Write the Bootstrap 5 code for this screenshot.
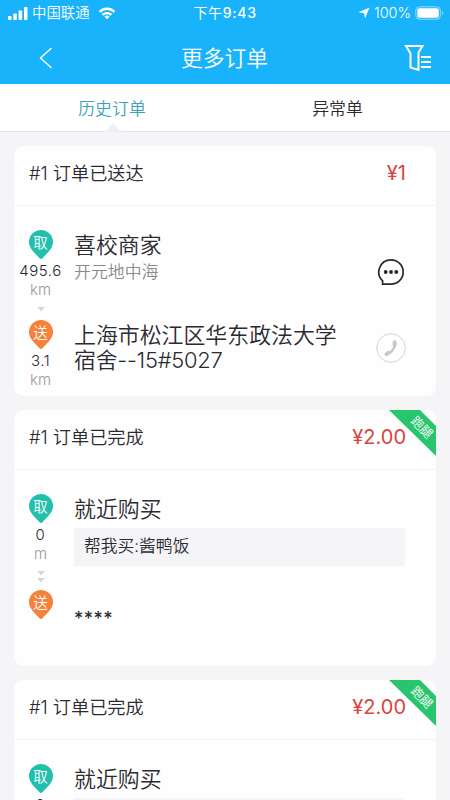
<!DOCTYPE html>
<html lang="zh-CN">
<head>
<meta charset="utf-8">
<meta name="viewport" content="width=device-width, initial-scale=1">
<title>更多订单</title>
<link href="https://cdn.jsdelivr.net/npm/bootstrap@5.3.0/dist/css/bootstrap.min.css" rel="stylesheet">
<style>
body{font-family:Inter,"Noto Sans CJK SC",sans-serif;font-weight:350;color:#2b2a30;background:#f5f4f7;height:800px;overflow:hidden;line-height:1}
svg{display:block;flex:none}
.topbar{background:#19b3fb;height:84px;color:#fff}
.status{height:25px;padding:1px 6px 0 8px;font-size:14.4px}
.status>div{flex:1 1 0}
.status .clock{font-weight:400;letter-spacing:.7px;font-size:14px;margin-right:2px}
.status .clock b{font-weight:500}
.title-row{height:66px;padding:0 18px 0 39px}
.title-row h1{font-size:21.8px;font-weight:350;margin:0 8px 0 0}
.tabs{height:48px;background:#fff;border-bottom:1px solid #e4e3e7;font-size:16.9px}
.tabs a{color:inherit;text-decoration:none;padding-top:3px}
.tabs .current{color:#3fa0bb;padding-right:1px}
.notch{left:50%;bottom:-1px;transform:translateX(-50%)}
.orders{padding-top:14px}
.order{margin:0 14px 14px;border-radius:9px;background:#fefefe;overflow:hidden}
.order-head{height:60px;padding:0 30px 5px 15px;border-bottom:1px solid #f2f1f4;font-size:18.2px}
.price{color:#d9443f;font-size:20px;font-weight:400}
.stop{padding-right:30px}
.rail{width:53px;flex:none;font-size:15px;font-weight:350;text-align:center}
.pin{width:24px;height:29px;margin:0 auto}
.pin span{left:0;right:0;top:5px;color:#fff;font-size:14.5px;line-height:16px}
.num{height:19px;line-height:19px;margin-top:2px;letter-spacing:.5px}
.unit{color:#99989d;height:19px;line-height:19px}
.name{font-size:21.9px;line-height:25px}
.stars{font-size:18px;letter-spacing:.4px;font-weight:450}
.house{letter-spacing:-.25px}
.sub{font-size:16.9px;color:#8d8b91;line-height:20px;margin-top:4px}
.info{padding:3px 0 0 7px}
.note{background:#f5f4f7;height:38px;width:331px;padding-left:10px;margin-top:6px;font-size:16.8px;line-height:37px}
.ribbon{right:0;top:0;width:47px;height:46px}
.ribbon b{left:20px;top:11px;width:26px;font-size:12.5px;line-height:14px;font-weight:350;color:#fff;transform:rotate(45deg)}
.first-body{height:190px;padding-top:24px}
.first-body .stop:first-child{height:90px}
.action{margin-right:1px}
.chat{margin-top:28px}
.call{margin-top:13px;margin-right:0}
.buy-body{height:196px;padding-top:24px}
.buy-body .stop:first-child{height:96px}
</style>
<script src="https://cdn.jsdelivr.net/npm/bootstrap@5.3.0/dist/js/bootstrap.bundle.min.js"></script>
</head>
<body>
<svg width="0" height="0" class="position-absolute">
  <defs>
    <path id="pin-shape" d="M12 0a12 12 0 0 1 12 12c0 7-7 12-10.5 16.200q-1.500 1.600-3 0C7 24 0 19 0 12A12 12 0 0 1 12 0z"/>
    <path id="ribbon-shape" d="M0 0H31L47 16V46z"/>
  </defs>
</svg>
<header class="topbar">
  <div class="status d-flex align-items-center">
    <div class="d-flex align-items-center">
      <svg width="20" height="13" fill="#fff"><rect y="9" width="3.500" height="4" rx=".8"/><rect x="5.300" y="6.500" width="3.500" height="6.500" rx=".8"/><rect x="10.600" y="3.500" width="3.500" height="9.500" rx=".8"/><rect x="16" width="3.500" height="13" rx=".8"/></svg>
      <span class="ms-1 text-nowrap">中国联通</span>
      <svg class="ms-2" width="18" height="13" viewBox="0 0 20 14" fill="none" stroke="#fff" stroke-width="2.600"><path d="M1.800 5.200a11.500 11.500 0 0 1 16.400 0M5 8.600a7 7 0 0 1 10 0"/><path d="M10 13.500 7.200 10.600a4 4 0 0 1 5.600 0z" fill="#fff" stroke="none"/></svg>
    </div>
    <span class="clock">下午<b>9:43</b></span>
    <div class="d-flex align-items-center justify-content-end">
      <svg width="12" height="12" fill="#fff"><path d="M11.500.5 7 11.500 6 6.200.5 5.300z"/></svg>
      <span class="mx-1">100%</span>
      <svg width="29" height="14" fill="none"><rect x=".8" y=".8" width="24.500" height="12.400" rx="3.500" stroke="#8fdcff"/><rect x="2.300" y="2.300" width="21.500" height="9.400" rx="2" fill="#fff"/><path d="M27 5q1.500 2 0 4" stroke="#8fdcff"/></svg>
    </div>
  </div>
  <div class="title-row d-flex align-items-center justify-content-between">
    <svg width="14" height="24" fill="none" stroke="#fff" stroke-width="1.400"><path d="M12.500 2 1.500 12l11 10"/></svg>
    <h1>更多订单</h1>
    <svg width="28" height="28" fill="none" stroke="#fff" stroke-width="2"><path d="M2 2h16.500L14.500 8.500V26L6.500 23.500V9.500z"/><path d="M17 13h10M17 18h10M17 23h10"/></svg>
  </div>
</header>
<nav class="tabs d-flex">
  <a href="#" class="current position-relative w-50 d-flex align-items-center justify-content-center">历史订单
    <svg class="notch position-absolute" width="16" height="9"><path d="M0 9 8 0l8 9z" fill="#f0eff3"/></svg>
  </a>
  <a href="#" class="w-50 d-flex align-items-center justify-content-center">异常单</a>
</nav>
<main class="orders">
  <section class="order">
    <div class="order-head d-flex align-items-center justify-content-between"><span>#1 订单已送达</span><span class="price">¥1</span></div>
    <div class="first-body">
      <div class="stop d-flex">
        <div class="rail">
          <div class="pin position-relative"><svg width="24" height="29" fill="#20bfae"><use href="#pin-shape"/></svg><span class="position-absolute">取</span></div>
          <div class="num">495.6</div><div class="unit">km</div>
          <svg class="mx-auto mt-2" width="8" height="5" fill="#d6d5da"><path d="M0 0H8L4 4.500z"/></svg>
        </div>
        <div class="info flex-grow-1"><div class="name">喜校商家</div><div class="sub">开元地中海</div></div>
        <svg class="action chat" width="28" height="28" fill="none"><path d="M14 1.800a12.200 12.200 0 1 1 0 24.400H5.600V22.800A12.200 12.200 0 0 1 14 1.800z" stroke="#29272e" stroke-width="1.700"/><g fill="#29272e"><circle cx="8.700" cy="14" r="1.900"/><circle cx="14" cy="14" r="1.900"/><circle cx="19.300" cy="14" r="1.900"/></g></svg>
      </div>
      <div class="stop d-flex">
        <div class="rail">
          <div class="pin position-relative"><svg width="24" height="29" fill="#f5813a"><use href="#pin-shape"/></svg><span class="position-absolute">送</span></div>
          <div class="num">3.1</div><div class="unit">km</div>
        </div>
        <div class="info flex-grow-1"><div class="name text-nowrap">上海市松江区华东政法大学<br><span class="house">宿舍--15#5027</span></div></div>
        <svg class="action call" width="30" height="30" fill="none"><circle cx="15" cy="15" r="14.300" stroke="#d3d2d7"/><path d="M10.500 21.500q7.200-2.500 8.800-11" stroke="#c9c8cd" stroke-width="2.600"/><path d="M18.600 9.200v2.800M10.500 21.200l1.900-1.300" stroke="#c9c8cd" stroke-width="4" stroke-linecap="round"/></svg>
      </div>
    </div>
  </section>
  <section class="order position-relative">
    <div class="order-head d-flex align-items-center justify-content-between"><span>#1 订单已完成</span><span class="price">¥2.00</span></div>
    <div class="ribbon position-absolute"><svg width="47" height="46" fill="#28c56d"><use href="#ribbon-shape"/></svg><b class="position-absolute">跑腿</b></div>
    <div class="buy-body">
      <div class="stop d-flex">
        <div class="rail">
          <div class="pin position-relative"><svg width="24" height="29" fill="#20bfae"><use href="#pin-shape"/></svg><span class="position-absolute">取</span></div>
          <div class="num">0</div><div class="unit">m</div>
          <svg class="mx-auto mt-2" width="8" height="13" fill="#d6d5da"><path d="M0 0H8L4 4.500zM0 7H8L4 11.500z"/></svg>
        </div>
        <div class="info"><div class="name">就近购买</div><div class="note">帮我买:酱鸭饭</div></div>
      </div>
      <div class="stop d-flex">
        <div class="rail"><div class="pin position-relative"><svg width="24" height="29" fill="#f5813a"><use href="#pin-shape"/></svg><span class="position-absolute">送</span></div></div>
        <div class="info pt-3"><div class="name stars">****</div></div>
      </div>
    </div>
  </section>
  <section class="order position-relative">
    <div class="order-head d-flex align-items-center justify-content-between"><span>#1 订单已完成</span><span class="price">¥2.00</span></div>
    <div class="ribbon position-absolute"><svg width="47" height="46" fill="#28c56d"><use href="#ribbon-shape"/></svg><b class="position-absolute">跑腿</b></div>
    <div class="buy-body">
      <div class="stop d-flex">
        <div class="rail">
          <div class="pin position-relative"><svg width="24" height="29" fill="#20bfae"><use href="#pin-shape"/></svg><span class="position-absolute">取</span></div>
          <div class="num">0</div>
        </div>
        <div class="info"><div class="name">就近购买</div><div class="note"></div></div>
      </div>
    </div>
  </section>
</main>
</body>
</html>
